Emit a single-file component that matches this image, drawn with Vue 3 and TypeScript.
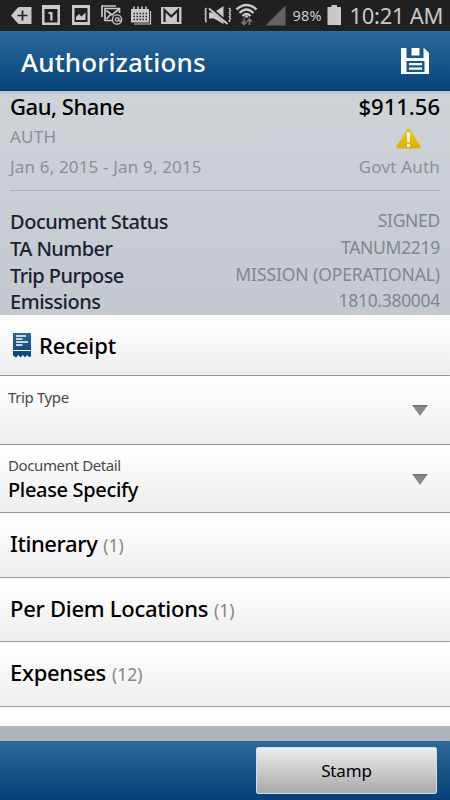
<script setup lang="ts">
interface Detail {
  label: string
  value: string
  key: string
}
interface Section {
  title: string
  count: number
  key: string
}

const details: Detail[] = [
  { label: 'Document Status', value: 'SIGNED', key: 'status' },
  { label: 'TA Number', value: 'TANUM2219', key: 'number' },
  { label: 'Trip Purpose', value: 'MISSION (OPERATIONAL)', key: 'purpose' },
  { label: 'Emissions', value: '1810.380004', key: 'emissions' },
]

const sections: Section[] = [
  { title: 'Itinerary', count: 1, key: 'itinerary' },
  { title: 'Per Diem Locations', count: 1, key: 'perdiem' },
  { title: 'Expenses', count: 12, key: 'expenses' },
]
</script>

<template>
  <div class="screen">
    <div class="statusbar">
      <svg class="status-icons" width="290" height="31" viewBox="0 0 290 31">
        <g fill="#c9c9c9">
          <!-- back tag with plus -->
          <path d="M11 15.500 17 8.500Q18 7 19.500 7H31.500V24H19.500Q18 24 17 22.500Z" />
          <path d="M22.500 10.500V20.500M17.500 15.500H27.500" stroke="#222" stroke-width="1.700" />
          <!-- calendar day -->
          <path d="M42 5H60V25H42ZM44.500 9V22.500H57.500V9Z" fill-rule="evenodd" />
          <path d="M48.500 12H52.500V20.500H50.200V14H48.500Z" />
          <!-- picture -->
          <path d="M72 5H90V25H72ZM74.500 8V22H87.500V8Z" fill-rule="evenodd" />
          <path d="M76 20V17L79 14 81.500 16.500 85.500 12.500V20Z" />
          <!-- calendar -->
          <path d="M131 9H149V22.500H131Z" />
          <path d="M134 6.500V10M138 6.500V10M142 6.500V10M146 6.500V10" stroke="#c9c9c9" stroke-width="1.600" />
          <path d="M133.500 13.500H147M133.500 16.500H147M133.500 19.500H147" stroke="#222" stroke-width="1.300" stroke-dasharray="1.500 1.500" />
          <path d="M134 24H150.500V11" fill="none" stroke="#c9c9c9" stroke-width="1.200" />
          <!-- mail -->
          <path d="M161 7H181.500V24H161Z" />
          <path d="M164.500 22V10L171.200 16.500 178 10V22" fill="none" stroke="#242424" stroke-width="2.200" />
          <!-- muted speaker -->
          <path d="M209 12.500H214L223.500 6V24L214 18.500H209Z" />
        </g>
        <!-- mail with at sign -->
        <g fill="none" stroke="#c9c9c9" stroke-width="1.700">
          <path d="M102 17V6H116" />
          <path d="M113 20.500H105V8.500H119.500V13" />
          <path d="M106.500 10.500 112 15 119 9M106.500 19 110.500 14.500" />
          <circle cx="117" cy="19.500" r="4.600" fill="#222" stroke-width="1.400" />
          <circle cx="117" cy="19.500" r="1.700" stroke-width="1.200" />
          <path d="M118.900 17.500V20.500Q120 21.500 121 20" stroke-width="1.100" />
        </g>
        <path d="M210 8 228 23.500" stroke="#222" stroke-width="3.600" />
        <path d="M209 8.500 227.500 24" stroke="#c9c9c9" stroke-width="1.900" />
        <g fill="none" stroke="#c9c9c9" stroke-width="1.800">
          <path d="M206.500 8 204.800 10 206.500 12 204.800 14 206.500 16 204.800 18 206.500 20 205.500 22.500" stroke-dasharray="2 0.700" />
          <path d="M229 8 230.800 10 229 12 230.800 14 229 16 230.800 18 229 20 230 22" stroke-dasharray="2 0.700" />
          <path d="M236.500 9.500Q246.500 0.500 256.500 9.500" stroke-width="2.400" />
          <path d="M239.500 13Q246.500 6 253.500 13M242.500 16Q246.500 12 250.500 16" stroke-width="2.300" />
        </g>
        <path d="M244 17.500 246.500 15 249 17.500Z" fill="#c9c9c9" />
        <g fill="none" stroke="#777" stroke-width="1.700">
          <path d="M244 18.500V24.500M241.500 21.800 244 24.500 246.500 21.800M249.500 25V19M247 21.800 249.500 19 252 21.800" />
        </g>
        <path d="M265.500 25.500 285.500 5.500V25.500Z" fill="#626262" />
      </svg>
      <span class="percent">98%</span>
      <svg class="battery" width="15" height="21" viewBox="0 0 15 21">
        <path d="M4.500 0H10V2H14V20H0.500V2H4.500Z" fill="#c9c9c9" />
      </svg>
      <span class="clock">10:21 AM</span>
    </div>

    <header class="titlebar">
      <h1 class="title">Authorizations</h1>
      <svg class="save" width="28" height="26" viewBox="0 0 28 26">
        <path d="M0 0H23L28 5V26H0Z" fill="#fff" />
        <path d="M5.500 0V10H22.500V0H18.500V7.500H10.500V0Z" fill="#17588f" />
        <path d="M5.500 13H23.500V24H5.500Z" fill="#17588f" />
        <path d="M8 15H21V17.200H8ZM8 19.500H21V21.700H8Z" fill="#fff" />
      </svg>
    </header>

    <section class="summary">
      <div class="top-row">
        <span class="name">Gau, Shane</span>
        <span class="amount">$911.56</span>
      </div>
      <div class="auth-row">
        <span class="muted auth">AUTH</span>
        <svg class="warning" width="25" height="22" viewBox="0 0 25 22">
          <defs>
            <linearGradient id="warn" x1="0" y1="0" x2="0" y2="1">
              <stop offset="0" stop-color="#d8c53a" />
              <stop offset="0.500" stop-color="#e8bd0c" />
              <stop offset="1" stop-color="#d9ae10" />
            </linearGradient>
          </defs>
          <path d="M10.800 1.500Q12.500-.5 14.200 1.500L24.600 18.500Q25 20.500 23 20.500H2Q0 20.500 .4 18.500Z" fill="url(#warn)" />
          <path d="M10.700 4.500H14.300L13.600 14.500H11.400ZM11 16H14V19H11Z" fill="#fffbe6" />
        </svg>
      </div>
      <div class="date-row">
        <span class="muted dates">Jan 6, 2015 - Jan 9, 2015</span>
        <span class="muted govt">Govt Auth</span>
      </div>
      <dl class="details">
        <div v-for="d in details" :key="d.key" class="detail">
          <dt :class="['label', d.key]">{{ d.label }}</dt>
          <dd :class="['value', d.key]">{{ d.value }}</dd>
        </div>
      </dl>
    </section>

    <main class="list">
      <div class="row receipt">
        <svg class="receipt-icon" width="18" height="25" viewBox="0 0 18 25">
          <defs>
            <linearGradient id="rcpt" x1="0" y1="0" x2="0" y2="1">
              <stop offset="0" stop-color="#2d6797" />
              <stop offset="1" stop-color="#0b4278" />
            </linearGradient>
          </defs>
          <path d="M0 0H18V17H0ZM0 18H18V23.500L16 24 14 22 12 24.500 10 22 7.500 24.500 5.500 22 3 24.500 0 22.500Z" fill="url(#rcpt)" />
          <path d="M3 3H13M3 6H9.500M3 9H15M3 12H9.500" stroke="#fff" stroke-width="1.400" />
        </svg>
        <span class="heading receipt-text">Receipt</span>
      </div>
      <div class="row field">
        <span class="caption trip">Trip Type</span>
        <span class="choice"></span>
        <svg class="arrow" width="16" height="11" viewBox="0 0 16 11">
          <path d="M.5 .5H15.500L8 11Z" fill="#888" />
          <path d="M.5 .7H15.500" stroke="#606060" />
        </svg>
      </div>
      <div class="row field">
        <span class="caption doc">Document Detail</span>
        <span class="choice">Please Specify</span>
        <svg class="arrow" width="16" height="11" viewBox="0 0 16 11">
          <path d="M.5 .5H15.500L8 11Z" fill="#888" />
          <path d="M.5 .7H15.500" stroke="#606060" />
        </svg>
      </div>
      <div v-for="s in sections" :key="s.key" :class="['row', 'section', s.key]">
        <span class="heading">{{ s.title }}</span>
        <span class="count">({{ s.count }})</span>
      </div>
      <div class="row partial"></div>
    </main>

    <div class="gap"></div>
    <footer class="footer">
      <button class="stamp" type="button"><span>Stamp</span></button>
    </footer>
  </div>
</template>

<style>
body {
  margin: 0;
}
</style>

<style scoped>
.screen {
  width: 450px;
  height: 800px;
  display: flex;
  flex-direction: column;
  overflow: hidden;
  background: #fdfdfd;
  font-family: "Noto Sans", "Open Sans", sans-serif;
  color: #000;
  white-space: nowrap;
}
.screen * {
  box-sizing: border-box;
}
.statusbar {
  flex: none;
  height: 31px;
  display: flex;
  background: #202020;
  border-bottom: 1px solid #17262b;
  color: #c9c9c9;
}
.status-icons {
  flex: none;
}
.percent {
  margin-left: 2.500px;
  width: 34.500px;
  font-size: 14.500px;
  line-height: 31px;
  letter-spacing: 0.200px;
}
.battery {
  flex: none;
  margin-top: 5px;
}
.clock {
  margin-left: 7.500px;
  font-size: 22px;
  line-height: 30px;
  letter-spacing: -0.300px;
}
.titlebar {
  flex: none;
  height: 60px;
  padding: 0 21px;
  display: flex;
  justify-content: space-between;
  background: linear-gradient(#2e6a9a, #1d5b8e 40%, #05427b);
  border-bottom: 1px solid #0a3868;
}
.title {
  margin: 0;
  font-size: 26px;
  line-height: 62px;
  font-weight: 500;
  letter-spacing: 0.150px;
  color: #fff;
}
.save {
  margin-top: 17px;
}
.summary {
  flex: none;
  height: 224px;
  padding: 0 10px;
  background: linear-gradient(#bcc4d0, #ced3d8 5px, #cacfd5 45%, #c4c9cf);
}
.top-row,
.auth-row,
.date-row,
.detail {
  display: flex;
  justify-content: space-between;
}
.top-row {
  height: 31px;
  font-size: 22px;
  line-height: 31px;
  font-weight: 500;
}
.name {
  letter-spacing: -0.450px;
}
.auth-row {
  height: 29px;
}
.muted {
  font-size: 17px;
  line-height: 29px;
  color: #8b9095;
}
.auth {
  letter-spacing: 0.250px;
}
.dates {
  letter-spacing: 0.160px;
}
.govt {
  letter-spacing: 0.200px;
}
.warning {
  margin: 6px 19px 0 0;
}
.date-row {
  height: 40px;
  border-bottom: 1px solid #a8adb3;
}
.date-row .muted {
  line-height: 31px;
}
.details {
  margin: 17px 0 0;
}
.detail {
  height: 26.800px;
}
.label {
  font-size: 20px;
  line-height: 27px;
  font-weight: 500;
  letter-spacing: -0.470px;
  color: #1a2233;
}
.label.number,
.label.purpose {
  letter-spacing: -0.580px;
}
.value {
  margin: 0;
  font-size: 17.500px;
  line-height: 24px;
  letter-spacing: -0.300px;
  color: #82888d;
}
.value.purpose {
  letter-spacing: -0.100px;
}
.list {
  flex: none;
  height: 411px;
  overflow: hidden;
}
.row {
  background: linear-gradient(#fff, #f8f8f8 45%, #eee);
  border-bottom: 1px solid #999;
}
.receipt {
  height: 61px;
  padding: 18px 13px 0;
  display: flex;
  gap: 8px;
}
.heading {
  font-size: 22px;
  line-height: 26px;
  font-weight: 500;
  letter-spacing: -0.280px;
}
.receipt-text {
  line-height: 25px;
  letter-spacing: -0.150px;
}
.itinerary .heading {
  letter-spacing: -0.400px;
}
.field {
  height: 68.500px;
  padding: 10px 22px 0 8px;
  display: grid;
  grid-template-columns: 1fr 16px;
  grid-template-rows: 22px 26px;
}
.caption {
  font-size: 15px;
  line-height: 22px;
  letter-spacing: -0.380px;
  color: #484848;
}
.doc {
  line-height: 20px;
}
.choice {
  grid-column: 1;
  grid-row: 2;
  font-size: 20px;
  line-height: 26px;
  font-weight: 500;
  letter-spacing: -0.330px;
}
.arrow {
  grid-column: 2;
  grid-row: 1 / 3;
  margin-top: 19px;
}
.section {
  height: 64.500px;
  padding: 17px 10px 0;
  display: flex;
  gap: 6px;
}
.count {
  font-size: 17.500px;
  line-height: 30px;
  color: #888;
}
.partial {
  height: 65px;
  background: linear-gradient(#fdfdff, #fafafa);
}
.gap {
  flex: none;
  height: 15px;
  background: #b0b5bc;
}
.footer {
  flex: none;
  height: 59px;
  padding: 6px 13px;
  display: flex;
  justify-content: flex-end;
  background: linear-gradient(#2e6a9a, #053f78);
}
.stamp {
  width: 181px;
  height: 47px;
  padding: 0;
  border: 1px solid #cfe0ec;
  border-radius: 2px;
  background: linear-gradient(#ededed, #a9a9a9);
  font: 400 17px/45px "Noto Sans", sans-serif;
  color: #000;
}
.stamp span {
  display: block;
  height: 47px;
  letter-spacing: -0.150px;
}
</style>
